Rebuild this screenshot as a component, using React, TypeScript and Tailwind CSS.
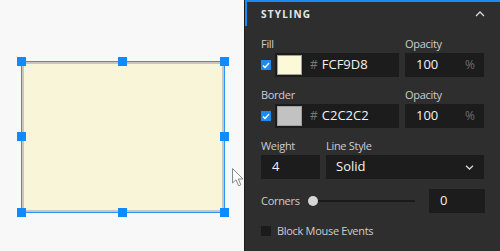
import type { FC, ReactNode } from 'react'

const font = { fontFamily: '"Open Sans", "Noto Sans", sans-serif' }

const Handle: FC<{ className: string }> = ({ className }) => (
  <div className={`absolute h-[9px] w-[9px] bg-[#0d8bff] ${className}`} />
)

const Check: FC<{ checked?: boolean }> = ({ checked }) =>
  checked ? (
    <div className="flex h-[10px] w-[10px] items-center justify-center bg-[#1a8cf0]">
      <svg width="8" height="7" viewBox="0 0 8 7" fill="none">
        <path d="M1 3.5 L3 5.5 L7 1" stroke="#fff" strokeWidth="1.4" />
      </svg>
    </div>
  ) : (
    <div className="h-[10px] w-[10px] bg-[#1b1b1b]" />
  )

const Label: FC<{ children: ReactNode; className?: string }> = ({ children, className }) => (
  <div className={`h-[14px] text-[11px] leading-[14px] tracking-[-0.3px] text-[#cdcdcd] ${className ?? ''}`}>{children}</div>
)

const ColorField: FC<{ checked?: boolean; color: string; value: string }> = ({ checked, color, value }) => (
  <div className="flex items-center gap-[4px]">
    <Check checked={checked} />
    <div className="flex h-[24px] w-[124px] items-center bg-[#1c1c1c] pl-[2px]">
      <div className="h-[20px] w-[25px] border border-[#a0a0a0]" style={{ background: color }} />
      <span className="ml-[8px] text-[12px] text-[#777]">#</span>
      <span className="ml-[4px] text-[13px] text-[#f2f2f2]">{value}</span>
    </div>
  </div>
)

const Opacity = () => (
  <div className="flex h-[24px] w-[79px] items-center justify-between bg-[#1c1c1c] pl-[11px] pr-[9px]">
    <span className="text-[13px] text-[#f2f2f2]">100</span>
    <span className="text-[12px] text-[#6f6f6f]">%</span>
  </div>
)

export default function App() {
  return (
    <div className="flex h-[251px] w-[500px] overflow-hidden" style={font}>
      <div className="relative w-[244px] bg-[#f8f8f8]">
        <div className="absolute left-[21px] top-[61px] h-[152px] w-[204px] border border-[#2a93f5]">
          <div className="h-full w-full border-2 border-[#c6c6c6] bg-[#f9f5d8]" />
        </div>
        <Handle className="left-[17px] top-[57px]" />
        <Handle className="left-[118px] top-[57px]" />
        <Handle className="left-[220px] top-[57px]" />
        <Handle className="left-[17px] top-[132px]" />
        <Handle className="left-[220px] top-[132px]" />
        <Handle className="left-[17px] top-[208px]" />
        <Handle className="left-[118px] top-[208px]" />
        <Handle className="left-[220px] top-[208px]" />
        <svg className="absolute left-[232px] top-[168px]" width="13" height="19" viewBox="0 0 13 19">
          <path d="M0.5 0.5 L0.5 15 L4 11.8 L6.6 17.8 L8.8 16.8 L6.3 11 L11 11 Z" fill="#fff" stroke="#8a8a8a" strokeWidth="1" />
        </svg>
      </div>

      <div className="flex flex-1 flex-col border-l border-[#1c1c1c] bg-[#2e2e2e]">
        <div className="flex h-[26px] items-center justify-between border-l-2 border-t-2 border-[#1a8cf0] pl-[14px] pr-[15px]">
          <span className="text-[10px] font-bold tracking-[1.2px] text-[#e6e6e6]">STYLING</span>
          <svg width="10" height="6" viewBox="0 0 10 6" fill="none">
            <path d="M1 5 L5 1 L9 5" stroke="#d8d8d8" strokeWidth="1.3" />
          </svg>
        </div>

        <div className="flex flex-col pl-[16px] pr-[15px] pt-[11px]">
          <div className="flex gap-[6px]">
            <div className="flex flex-col gap-[2px]">
              <Label>Fill</Label>
              <ColorField checked color="#FCF9D8" value="FCF9D8" />
            </div>
            <div className="flex flex-col gap-[2px]">
              <Label>Opacity</Label>
              <Opacity />
            </div>
          </div>

          <div className="mt-[11px] flex gap-[6px]">
            <div className="flex flex-col gap-[2px]">
              <Label>Border</Label>
              <ColorField checked color="#C2C2C2" value="C2C2C2" />
            </div>
            <div className="flex flex-col gap-[2px]">
              <Label>Opacity</Label>
              <Opacity />
            </div>
          </div>

          <div className="mt-[11px] flex gap-[6px]">
            <div className="flex flex-col gap-[2px]">
              <Label>Weight</Label>
              <div className="flex h-[24px] w-[59px] items-center bg-[#1c1c1c] pl-[11px] text-[13px] text-[#f2f2f2]">4</div>
            </div>
            <div className="flex flex-col gap-[2px]">
              <Label>Line Style</Label>
              <div className="flex h-[24px] w-[158px] items-center justify-between bg-[#1c1c1c] pl-[10px] pr-[10px]">
                <span className="text-[13px] text-[#f2f2f2]">Solid</span>
                <svg width="9" height="5" viewBox="0 0 9 5" fill="none">
                  <path d="M1 0.8 L4.5 4 L8 0.8" stroke="#d8d8d8" strokeWidth="1.3" />
                </svg>
              </div>
            </div>
          </div>

          <div className="mt-[10px] flex h-[24px] items-center">
            <span className="w-[47px] text-[11px] tracking-[-0.3px] text-[#cdcdcd]">Corners</span>
            <div className="relative flex h-[10px] w-[107px] items-center">
              <div className="ml-[5px] h-[2px] flex-1 bg-[#1a1a1a]" />
              <div className="absolute left-0 top-0 h-[10px] w-[10px] rounded-full bg-[#d6d6d6]" />
            </div>
            <div className="ml-auto flex h-[24px] w-[56px] items-center bg-[#1c1c1c] pl-[11px] text-[13px] text-[#f2f2f2]">0</div>
          </div>

          <div className="mt-[10px] flex h-[16px] items-center gap-[6px]">
            <Check />
            <span className="text-[11px] tracking-[-0.3px] text-[#cdcdcd]">Block Mouse Events</span>
          </div>
        </div>
      </div>
    </div>
  )
}
